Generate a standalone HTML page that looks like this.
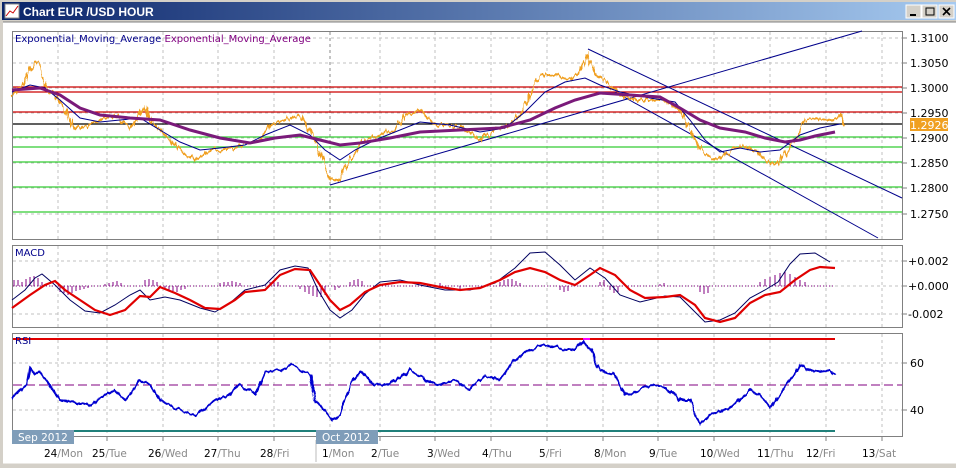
<!DOCTYPE html>
<html><head><meta charset="utf-8"><style>
html,body{margin:0;padding:0;width:956px;height:468px;overflow:hidden;background:#d4d0c8;font-family:"Liberation Sans",sans-serif}
</style></head><body>
<svg width="956" height="468" xmlns="http://www.w3.org/2000/svg" style="position:absolute;left:0;top:0">
<defs><linearGradient id="tb" x1="0" x2="1"><stop offset="0" stop-color="#0a246a"/><stop offset="1" stop-color="#a6caf0"/></linearGradient>
<filter id="jag" x="-2%" y="-20%" width="104%" height="140%"><feTurbulence type="fractalNoise" baseFrequency="0.35 0.05" numOctaves="2" seed="3"/><feDisplacementMap in="SourceGraphic" scale="9" xChannelSelector="R" yChannelSelector="G"/></filter>
<filter id="jag2" x="-2%" y="-20%" width="104%" height="140%"><feTurbulence type="fractalNoise" baseFrequency="0.2 0.05" numOctaves="2" seed="7"/><feDisplacementMap in="SourceGraphic" scale="6" xChannelSelector="R" yChannelSelector="G"/></filter>
</defs>
<rect x="0" y="0" width="956" height="468" fill="#d4d0c8"/>
<rect x="2" y="2" width="954" height="18" fill="url(#tb)"/>
<rect x="5" y="4" width="14" height="14" fill="#fff" stroke="#888"/>
<polyline points="6,16 10,11 13,13 18,6" fill="none" stroke="#c00" stroke-width="1"/>
<text x="23" y="16" font-size="12" font-weight="bold" fill="#fff">Chart EUR /USD  HOUR</text>
<g fill="#d4d0c8" stroke="#fff"><rect x="906" y="5" width="15" height="13"/><rect x="922" y="5" width="15" height="13"/><rect x="939" y="5" width="15" height="13"/></g>
<g stroke="#000" fill="none"><line x1="910" y1="15" x2="916" y2="15" stroke-width="2"/><rect x="926" y="8" width="8" height="7"/><path d="M943 8 L950 15 M950 8 L943 15" stroke-width="1.6"/></g>
<rect x="3" y="22" width="953" height="441" fill="#fff"/>
<line x1="3" y1="22" x2="956" y2="22" stroke="#808080"/>
<g fill="#fff" stroke="#808080"><rect x="12.5" y="31.5" width="890" height="208"/><rect x="12.5" y="245.5" width="890" height="82"/><rect x="12.5" y="333.5" width="890" height="103"/></g>
<g stroke="#c0c0c0" stroke-dasharray="3,3">
<path d="M58 32V239M107 32V239M163 32V239M218 32V239M274 32V239M380 32V239M435 32V239M491 32V239M547 32V239M603 32V239M658 32V239M714 32V239M770 32V239M826 32V239M882 32V239"/>
<path d="M58 246V327M107 246V327M163 246V327M218 246V327M274 246V327M330 246V327M380 246V327M435 246V327M491 246V327M547 246V327M603 246V327M658 246V327M714 246V327M770 246V327M826 246V327M882 246V327"/>
<path d="M58 334V436M107 334V436M163 334V436M218 334V436M274 334V436M330 334V436M380 334V436M435 334V436M491 334V436M547 334V436M603 334V436M658 334V436M714 334V436M770 334V436M826 334V436M882 334V436"/>
<path d="M13 38H902M13 63H902M13 88H902M13 113H902M13 138H902M13 163H902M13 188H902M13 214H902"/>
<path d="M13 261H902M13 286H902M13 314H902M13 363H902M13 410H902"/>
</g>
<line x1="330" y1="32" x2="330" y2="239" stroke="#888" stroke-dasharray="3,3"/>
<g stroke-width="1.2"><line x1="13" y1="87" x2="902" y2="87" stroke="#c00"/><line x1="13" y1="92" x2="902" y2="92" stroke="#c00"/><line x1="13" y1="112" x2="902" y2="112" stroke="#c00"/><line x1="13" y1="124" x2="902" y2="124" stroke="#000"/>
<g stroke="#3c3"><line x1="13" y1="137" x2="902" y2="137"/><line x1="13" y1="147" x2="902" y2="147"/><line x1="13" y1="162" x2="902" y2="162"/><line x1="13" y1="187" x2="902" y2="187"/><line x1="13" y1="212" x2="902" y2="212"/></g></g>
<g stroke="#00008b" fill="none"><line x1="330" y1="185" x2="862" y2="31"/><line x1="588" y1="49" x2="902" y2="198"/><line x1="615" y1="92" x2="878" y2="238"/></g>
<g filter="url(#jag)"><polyline fill="none" stroke="#f0a020" stroke-width="2" points="12,95 22,85 30,70 35,62 40,65 45,85 55,95 65,110 75,130 90,125 100,120 115,115 130,130 145,105 150,120 160,130 170,140 180,150 195,160 210,150 225,150 245,145 260,140 270,125 285,120 300,115 310,130 320,150 330,180 340,180 350,160 365,140 380,135 395,130 405,115 420,110 435,125 450,125 465,130 480,140 495,130 510,125 520,115 530,95 540,75 555,75 570,80 580,70 588,55 595,75 605,80 620,95 635,100 650,100 665,100 680,110 690,130 700,150 715,160 725,155 740,145 755,150 765,160 775,165 785,155 795,140 805,120 815,118 825,120 835,120 840,115 845,125"/></g>
<polyline fill="none" stroke="#00008b" stroke-width="1" points="12,92 30,85 45,88 60,100 80,118 100,122 120,120 140,118 160,130 180,142 200,150 220,148 245,145 265,135 290,125 310,135 325,150 340,160 355,150 375,140 400,130 420,122 450,125 480,132 505,128 525,112 545,92 565,82 585,78 600,85 620,92 650,98 675,102 690,120 705,140 720,152 740,148 760,152 780,150 800,135 820,128 840,124"/>
<polyline fill="none" stroke="#7a1a7a" stroke-width="3" points="12,90 40,88 60,95 80,108 100,115 130,118 160,120 190,130 220,138 250,143 275,138 300,135 320,140 340,145 360,143 390,138 420,132 460,130 500,128 530,120 555,108 575,100 600,93 630,95 660,97 680,108 700,120 720,128 745,132 765,138 785,142 800,140 815,136 835,132"/>
<g stroke="#800080" stroke-width="1">
<path d="M14 286V280M18 286V280M22 286V282M26 286V279M30 286V277M34 286V276M38 286V278M42 286V282M60 286V292M64 286V293M68 286V295M72 286V293M76 286V291M80 286V290M84 286V289M88 286V288M105 286V284M109 286V283M113 286V282M117 286V281M121 286V283M145 286V280M149 286V279M153 286V280M157 286V282M165 286V289M169 286V290M173 286V291M177 286V292M181 286V290M185 286V289M220 286V283M224 286V282M228 286V282M232 286V281M236 286V282M240 286V283M270 286V282M274 286V281M278 286V282M300 286V289M305 286V292M309 286V294M313 286V296M317 286V297M321 286V297M325 286V295M335 286V290M339 286V288M350 286V282M354 286V280M358 286V279M362 286V281M440 286V283M460 286V289M500 286V282M504 286V280M508 286V279M512 286V279M516 286V281M520 286V283M560 286V290M564 286V292M568 286V291M600 286V282M604 286V280M610 286V290M614 286V293M618 286V292M660 286V284M664 286V283M700 286V292M704 286V294M708 286V293M760 286V282M765 286V279M770 286V277M775 286V275M780 286V273M785 286V272M790 286V274M795 286V277M800 286V280M805 286V282"/>
</g>
<line x1="13" y1="286" x2="835" y2="286" stroke="#800080" stroke-dasharray="1,2"/>
<polyline fill="none" stroke="#000060" stroke-width="1" points="12,300 25,290 35,278 42,274 55,285 70,300 85,311 100,313 115,305 130,295 140,290 150,300 165,297 180,300 200,308 215,312 230,303 245,290 265,285 280,270 295,266 308,268 318,290 330,310 340,318 352,310 365,294 380,282 400,280 420,285 445,290 470,290 495,283 515,268 530,253 545,252 560,265 575,280 590,268 605,278 620,295 640,302 665,296 680,297 695,312 705,322 720,320 735,313 750,298 765,290 778,282 790,264 800,254 815,253 830,262"/>
<polyline fill="none" stroke="#e00000" stroke-width="2.2" points="12,308 30,295 45,285 55,281 65,290 80,300 95,310 110,315 125,310 140,296 150,297 160,287 175,293 190,300 205,308 220,309 235,300 245,292 265,290 280,275 295,269 310,270 320,285 330,300 340,310 350,305 365,292 380,285 400,282 420,283 440,287 460,290 480,288 500,280 515,272 530,268 545,272 560,280 575,285 590,275 600,268 615,275 630,290 645,298 665,297 680,295 695,305 705,318 720,322 735,318 750,303 765,295 780,292 795,280 810,270 820,267 835,268"/>
<line x1="13" y1="339" x2="835" y2="339" stroke="#e00000" stroke-width="2"/>
<line x1="583" y1="339" x2="590" y2="339" stroke="#ff00ff" stroke-width="2"/>
<line x1="13" y1="431" x2="835" y2="431" stroke="#20807a" stroke-width="2"/>
<line x1="13" y1="385" x2="902" y2="385" stroke="#800080" stroke-dasharray="9,4"/>
<g filter="url(#jag2)"><polyline fill="none" stroke="#0000d0" stroke-width="2" points="12,398 20,390 27,385 30,368 35,375 40,372 50,385 60,400 75,402 90,405 100,398 115,390 125,400 140,380 150,385 160,400 180,410 195,415 205,410 215,400 230,395 240,385 255,395 265,372 280,370 290,365 300,370 310,375 315,400 325,410 332,420 340,415 350,385 360,372 375,385 390,383 400,378 410,368 425,380 440,385 455,380 470,390 485,375 500,380 515,360 530,350 545,345 560,348 575,350 583,340 590,350 600,370 615,375 625,395 640,390 650,385 665,388 680,400 690,400 700,425 710,415 725,410 740,400 750,390 760,395 770,408 780,395 790,380 800,365 810,370 820,372 830,370 835,375"/></g>
<text x="15" y="42" font-size="10" fill="#00008b" font-family="DejaVu Sans, sans-serif">Exponential_Moving_Average <tspan fill="#800080">Exponential_Moving_Average</tspan></text>
<text x="15" y="256" font-size="10" fill="#00008b" font-family="DejaVu Sans, sans-serif">MACD</text>
<text x="15" y="344" font-size="10" fill="#00008b" font-family="DejaVu Sans, sans-serif">RSI</text>
<g font-size="11" fill="#000" font-family="DejaVu Sans, sans-serif">
<g stroke="#808080"><path d="M902 38H907M902 63H907M902 88H907M902 113H907M902 138H907M902 163H907M902 188H907M902 214H907M902 261H907M902 286H907M902 314H907M902 363H907M902 410H907"/></g>
<text x="910" y="42">1.3100</text><text x="910" y="67">1.3050</text><text x="910" y="92">1.3000</text><text x="910" y="117">1.2950</text><text x="910" y="142">1.2900</text><text x="910" y="167">1.2850</text><text x="910" y="192">1.2800</text><text x="910" y="218">1.2750</text>
<rect x="910" y="118" width="38" height="13" fill="#f0a020"/><text x="910" y="129" fill="#fff">1.2926</text>
<text x="908" y="265">+0.002</text><text x="908" y="290">+0.000</text><text x="908" y="318">-0.002</text>
<text x="910" y="367">60</text><text x="910" y="414">40</text>
</g>
<g stroke="#808080"><path d="M58 437V441M107 437V441M163 437V441M218 437V441M274 437V441M330 437V441M380 437V441M435 437V441M491 437V441M547 437V441M603 437V441M658 437V441M714 437V441M770 437V441M826 437V441M882 437V441"/></g>
<line x1="316" y1="440" x2="316" y2="462" stroke="#bbb"/>
<rect x="12" y="430" width="62" height="14" fill="#7f9db9"/><text x="18" y="441" font-size="10.5" fill="#fff" font-family="DejaVu Sans, sans-serif">Sep 2012</text>
<rect x="316" y="430" width="62" height="14" fill="#7f9db9"/><text x="322" y="441" font-size="10.5" fill="#fff" font-family="DejaVu Sans, sans-serif">Oct 2012</text>
<g font-size="10.5" fill="#000" font-family="DejaVu Sans, sans-serif">
<text x="44" y="457">24<tspan fill="#888">/Mon</tspan></text><text x="92" y="457">25<tspan fill="#888">/Tue</tspan></text><text x="148" y="457">26<tspan fill="#888">/Wed</tspan></text><text x="204" y="457">27<tspan fill="#888">/Thu</tspan></text><text x="260" y="457">28<tspan fill="#888">/Fri</tspan></text>
<text x="322" y="457">1<tspan fill="#888">/Mon</tspan></text><text x="371" y="457">2<tspan fill="#888">/Tue</tspan></text><text x="427" y="457">3<tspan fill="#888">/Wed</tspan></text><text x="482" y="457">4<tspan fill="#888">/Thu</tspan></text><text x="539" y="457">5<tspan fill="#888">/Fri</tspan></text>
<text x="594" y="457">8<tspan fill="#888">/Mon</tspan></text><text x="649" y="457">9<tspan fill="#888">/Tue</tspan></text><text x="700" y="457">10<tspan fill="#888">/Wed</tspan></text><text x="757" y="457">11<tspan fill="#888">/Thu</tspan></text><text x="806" y="457">12<tspan fill="#888">/Fri</tspan></text><text x="862" y="457">13<tspan fill="#888">/Sat</tspan></text>
</g>
<rect x="0" y="463" width="956" height="5" fill="#d4d0c8"/>
<line x1="3" y1="463" x2="956" y2="463" stroke="#fff"/>
</svg>
</body></html>
